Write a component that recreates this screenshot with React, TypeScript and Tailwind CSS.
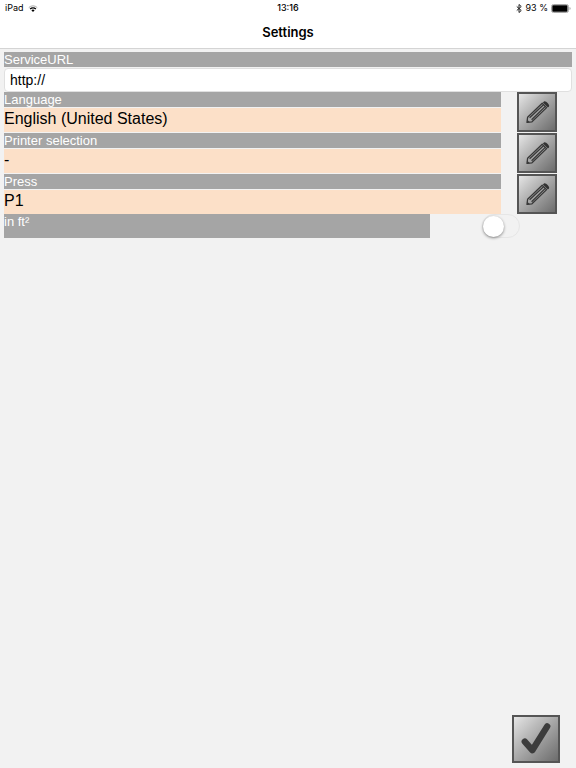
import { useState } from "react";

const rows = [
  { id: "language", label: "Language", value: "English (United States)" },
  { id: "printer", label: "Printer selection", value: "-" },
  { id: "press", label: "Press", value: "P1" },
];

function WifiIcon() {
  return (
    <svg viewBox="0 0 20 14" className="h-[7px] w-[10px]" aria-hidden="true">
      <path d="M1.5 5.2a12 12 0 0 1 17 0" fill="none" stroke="#aaa" strokeWidth="2" />
      <path d="M4.3 8.2a8.2 8.2 0 0 1 11.4 0" fill="none" stroke="#000" strokeWidth="2.8" />
      <path d="M6.8 10.6a4.6 4.6 0 0 1 6.4 0L10 13.8z" fill="#000" />
    </svg>
  );
}

function BluetoothIcon() {
  return (
    <svg viewBox="0 0 12 18" className="h-[9px] w-[6px]" aria-hidden="true">
      <path d="M1.5 5l9 8L6 17V1l4.5 4-9 8" fill="none" stroke="#222" strokeWidth="2" />
    </svg>
  );
}

function BatteryIcon() {
  return (
    <svg viewBox="0 0 20 9" className="h-[9px] w-[20px]" aria-hidden="true">
      <rect x="0.5" y="0.5" width="17" height="8" rx="2" fill="#fff" stroke="#a8a8a8" />
      <rect x="1.3" y="1.3" width="15.2" height="6.4" rx="0.8" fill="#000" />
      <path d="M18.6 3v3c1.2-.4 1.2-2.6 0-3z" fill="#888" />
    </svg>
  );
}

function PencilIcon() {
  return (
    <svg viewBox="0 0 36 36" className="h-9 w-9" aria-hidden="true">
      <g fill="none" stroke="#383838" strokeWidth="1.3" strokeLinejoin="round">
        <path d="M8 28.4l.6-5.2L23.2 9.2l4.4 4.4L13 27.8z" />
        <path d="M10.6 23.8L24.5 10.8M12.6 25.8L26.3 12.4" />
      </g>
      <path d="M25 7.4c1.4-1.2 6.2 3.4 5 4.9l-1.1 1.1-5-4.8z" fill="#333" />
      <path d="M8 28.6l.4-2.8 2.4 2.4z" fill="#383838" />
    </svg>
  );
}

function CheckIcon() {
  return (
    <svg viewBox="0 0 44 44" className="h-11 w-11" aria-hidden="true">
      <path d="M10.8 24.6l7.5 8.6L33.2 9.4" fill="none" stroke="#3c3c3c" strokeWidth="6.4" strokeLinecap="round" strokeLinejoin="round" />
    </svg>
  );
}

export default function App() {
  const [url, setUrl] = useState("http://");
  const [metric, setMetric] = useState(false);

  return (
    <div className="flex min-h-screen flex-col bg-[#f2f2f2] font-['Liberation_Sans',sans-serif] text-black">
      <header className="border-b border-[#d4d4d4] bg-white font-['Inter','Liberation_Sans',sans-serif]">
        <div className="grid h-4 grid-cols-3 items-center pr-[5px] pl-[5px] text-[9px] leading-4">
          <div className="flex items-center gap-1">
            <span>iPad</span>
            <WifiIcon />
          </div>
          <span className="text-center font-medium">13:16</span>
          <div className="flex items-center justify-end gap-[3px]">
            <BluetoothIcon />
            <span className="whitespace-nowrap">93 %</span>
            <BatteryIcon />
          </div>
        </div>
        <h1 className="h-8 text-center text-[13px] leading-8 font-semibold">Settings</h1>
      </header>

      <main className="flex grow flex-col px-1 pt-[3px] pb-[5px]">
        <label htmlFor="service-url" className="mb-px block h-[15px] bg-[#a5a5a5] text-[13px] leading-[15px] text-white">
          ServiceURL
        </label>
        <input
          id="service-url"
          type="text"
          value={url}
          onChange={(e) => setUrl(e.target.value)}
          className="h-6 w-full rounded-[4px] border border-[#e0e0e0] bg-white px-[5px] text-sm leading-5 outline-none"
        />

        <div className="flex flex-col gap-px">
          {rows.map((row) => (
            <section key={row.id} className="grid grid-cols-8">
              <div className="col-span-7 flex flex-col gap-px">
                <h2 id={row.id} className="h-[15px] bg-[#a5a5a5] text-[13px] leading-[15px] text-white">
                  {row.label}
                </h2>
                <p className="h-6 bg-[#fce0c8] text-base leading-[22px]">{row.value}</p>
              </div>
              <button
                type="button"
                aria-labelledby={row.id}
                className="flex h-10 w-10 items-center justify-center justify-self-center border-2 border-[#555] bg-linear-to-br from-[#e6e6e6] to-[#6c6c6c]"
              >
                <PencilIcon />
              </button>
            </section>
          ))}
        </div>

        <div className="grid grid-cols-4">
          <label htmlFor="unit" className="col-span-3 h-6 bg-[#a5a5a5] text-[13px] leading-[15px] text-white">
            in ft²
          </label>
          <input
            id="unit"
            type="checkbox"
            role="switch"
            checked={metric}
            onChange={(e) => setMetric(e.target.checked)}
            className="flex h-6 w-[38px] appearance-none items-center justify-self-center rounded-full border border-[#e6e6e6] before:size-[21px] before:rounded-full before:bg-white before:shadow-[0_1px_3px_rgba(0,0,0,0.45)] checked:justify-end checked:bg-[#4cd964]"
          />
        </div>

        <button
          type="button"
          aria-label="Confirm"
          className="mt-auto mr-3 flex h-12 w-12 items-center justify-center self-end border-2 border-[#555] bg-linear-to-br from-[#e6e6e6] to-[#6c6c6c]"
        >
          <CheckIcon />
        </button>
      </main>
    </div>
  );
}
